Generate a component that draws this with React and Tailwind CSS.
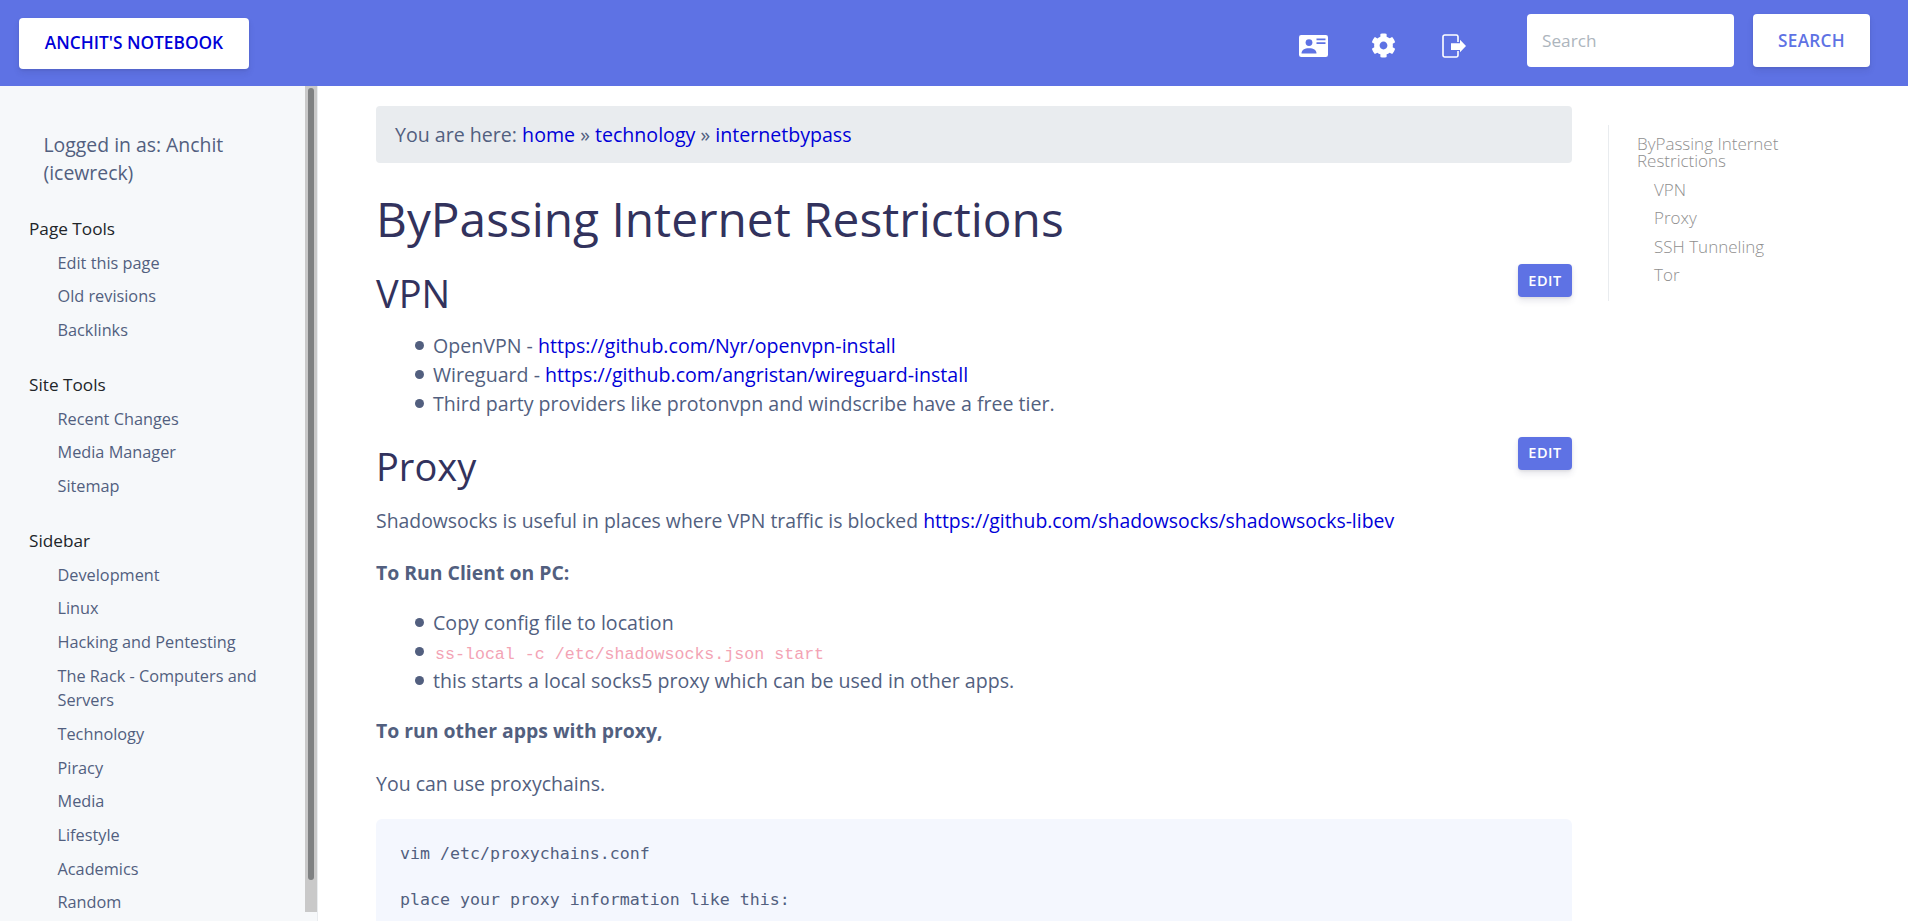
import { FaCog } from 'react-icons/fa'

const SANS = "font-['Open_Sans',sans-serif]"
const BULLET = "relative before:absolute before:left-[-18px] before:top-[10px] before:size-[9px] before:rounded-full before:bg-[#525f7f]"

const sideGroups = [
  { title: 'Page Tools', items: ['Edit this page', 'Old revisions', 'Backlinks'] },
  { title: 'Site Tools', items: ['Recent Changes', 'Media Manager', 'Sitemap'] },
  {
    title: 'Sidebar',
    items: ['Development', 'Linux', 'Hacking and Pentesting', 'The Rack - Computers and Servers', 'Technology', 'Piracy', 'Media', 'Lifestyle', 'Academics', 'Random'],
  },
]

function CardIcon() {
  return (
    <svg width="29" height="22" viewBox="0 0 29 22" className="block">
      <rect width="29" height="22" rx="2.2" fill="#fff" />
      <circle cx="10" cy="7.6" r="3.4" fill="#5e72e4" />
      <path d="M2.5 18.5c0-3.4 3-5.2 7.5-5.2s7.5 1.8 7.5 5.2z" fill="#5e72e4" />
      <path d="M17.5 3.5h9v1.8h-9zM17.5 7.3h9v1.8h-9z" fill="#5e72e4" />
    </svg>
  )
}

function ExitIcon() {
  return (
    <svg width="24" height="24" viewBox="0 0 24 24" fill="none" className="block">
      <path d="M16 8V2.5A1.7 1.7 0 0 0 14.3 1H2.7A1.7 1.7 0 0 0 1 2.7v18.6A1.7 1.7 0 0 0 2.7 23h11.6a1.7 1.7 0 0 0 1.7-1.7V17" stroke="#fff" strokeWidth="1.6" />
      <path d="M9 9.3h9V5.7l6 6.3-6 6.3V16H9z" fill="#fff" />
    </svg>
  )
}

function Link({ children }) {
  return <a className="text-[#0000d8]">{children}</a>
}

function EditButton() {
  return (
    <button className="w-[54px] h-[33px] rounded bg-[#5e72e4] text-white text-[14.5px] font-semibold tracking-[0.5px] shadow-[0_4px_6px_rgba(50,50,93,0.11),0_1px_3px_rgba(0,0,0,0.08)]">
      EDIT
    </button>
  )
}

export default function App() {
  return (
    <div className={`h-screen overflow-hidden flex flex-col bg-white text-[#525f7f] ${SANS}`}>
      {/* Header */}
      <header className="h-[86px] shrink-0 bg-[#5e72e4] flex items-center pl-[19px] pr-[38px]">
        <button className="w-[230px] h-[51px] rounded bg-white text-[#0000d8] text-[17.3px] font-semibold shadow-[0_4px_6px_rgba(50,50,93,0.11),0_1px_3px_rgba(0,0,0,0.08)]">
          ANCHIT'S NOTEBOOK
        </button>
        <div className="ml-auto flex items-center mt-[5px]">
          <CardIcon />
          <FaCog className="text-white text-[25px] ml-[43px]" />
          <div className="ml-[46px]"><ExitIcon /></div>
        </div>
        <input
          placeholder="Search"
          className="ml-[61px] w-[207px] h-[53px] rounded bg-white px-[15px] text-[17.2px] placeholder:text-[#adb5bd] outline-none -mt-[5px]"
        />
        <button className="ml-[19px] w-[117px] h-[53px] rounded bg-white text-[#5e72e4] text-[17.2px] font-semibold tracking-[0.3px] -mt-[5px] shadow-[0_4px_6px_rgba(50,50,93,0.11),0_1px_3px_rgba(0,0,0,0.08)]">
          SEARCH
        </button>
      </header>

      <div className="flex-1 flex min-h-0">
        {/* Sidebar */}
        <aside className="relative w-[318px] shrink-0 bg-[#f6f8fa] border-r border-[#e9ecef] overflow-hidden">
          <div className="pl-[29px] pr-[20px]">
            <p className="pl-[14.5px] pt-[45px] mb-[30px] text-[19.4px] leading-[28px] w-[260px]">Logged in as: Anchit (icewreck)</p>
            {sideGroups.map((g) => (
              <div key={g.title} className="mb-[26px]">
                <h3 className="text-[#212529] text-[17.2px] font-medium leading-[24px] mb-[5px]">{g.title}</h3>
                <ul className="pl-[28.5px] text-[16.3px] text-[#525f7f]">
                  {g.items.map((it) => (
                    <li key={it} className="py-[4.65px] leading-[24.4px] w-[225px]">{it}</li>
                  ))}
                </ul>
              </div>
            ))}
          </div>
          {/* scrollbar */}
          <div className="absolute right-0 top-0 w-[12px] h-[826px] bg-[#c9c9c9]">
            <div className="absolute left-[3px] top-[2px] w-[6px] h-[792px] rounded bg-[#7f8182]" />
          </div>
        </aside>

        {/* Main */}
        <main className="flex-1 min-w-0 flex pl-[58px] pt-[20px]">
          <div className="w-[1196px] shrink-0">
            <div className="h-[57px] rounded bg-[#e9ecef] flex items-center px-[19px] text-[19.6px]">
              <span>You are here: <Link>home</Link> » <Link>technology</Link> » <Link>internetbypass</Link></span>
            </div>
            <h1 className="mt-[26px] text-[#32325d] text-[47.8px] leading-[60px]">ByPassing Internet Restrictions</h1>

            <div className="flex justify-between items-start mt-[15px]">
              <h2 className="mt-[5px] text-[#32325d] text-[38px] leading-[48px]">VPN</h2>
              <EditButton />
            </div>
            <ul className="mt-[14px] pl-[57px] text-[19.6px] leading-[29.2px]">
              <li className={BULLET}>OpenVPN - <Link>https://github.com/Nyr/openvpn-install</Link></li>
              <li className={BULLET}>Wireguard - <Link>https://github.com/angristan/wireguard-install</Link></li>
              <li className={BULLET}>Third party providers like protonvpn and windscribe have a free tier.</li>
            </ul>

            <div className="flex justify-between items-start mt-[18px]">
              <h2 className="mt-[5px] text-[#32325d] text-[38px] leading-[48px]">Proxy</h2>
              <EditButton />
            </div>
            <p className="mt-[16px] text-[19.4px] leading-[29.2px]">
              Shadowsocks is useful in places where VPN traffic is blocked <Link>https://github.com/shadowsocks/shadowsocks-libev</Link>
            </p>
            <p className="mt-[23px] text-[19.4px] leading-[29.2px] font-bold">To Run Client on PC:</p>
            <ul className="mt-[21px] pl-[57px] text-[19.6px] leading-[29.2px]">
              <li className={BULLET}>Copy config file to location</li>
              <li className={BULLET}><code className="font-['Liberation_Mono',monospace] text-[16.64px] leading-none text-[#f3a4b5] px-[2px]">ss-local -c /etc/shadowsocks.json start</code></li>
              <li className={BULLET}>this starts a local socks5 proxy which can be used in other apps.</li>
            </ul>
            <p className="mt-[20px] text-[19.4px] leading-[29.2px] font-bold">To run other apps with proxy,</p>
            <p className="mt-[24px] text-[19.5px] leading-[29.2px]">You can use proxychains.</p>
            <pre className="mt-[21px] h-[200px] rounded-[6px] bg-[#f4f7fe] px-[24px] pt-[23px] font-['DejaVu_Sans_Mono',monospace] text-[16.6px] leading-[23px]">
              {'vim /etc/proxychains.conf\n\nplace your proxy information like this:'}
            </pre>
          </div>

          {/* TOC */}
          <nav className="ml-[36px] mt-[19px] h-[176px] w-[220px] border-l border-[#e9ecef] pl-[28px] pt-[10px] text-[17px] text-[#8f8f8f] font-light">
            <p className="leading-[17px]">ByPassing Internet Restrictions</p>
            <ul className="pl-[17px] mt-[7px]">
              {['VPN', 'Proxy', 'SSH Tunneling', 'Tor'].map((t) => (
                <li key={t} className="leading-[28.3px]">{t}</li>
              ))}
            </ul>
          </nav>
        </main>
      </div>
    </div>
  )
}
